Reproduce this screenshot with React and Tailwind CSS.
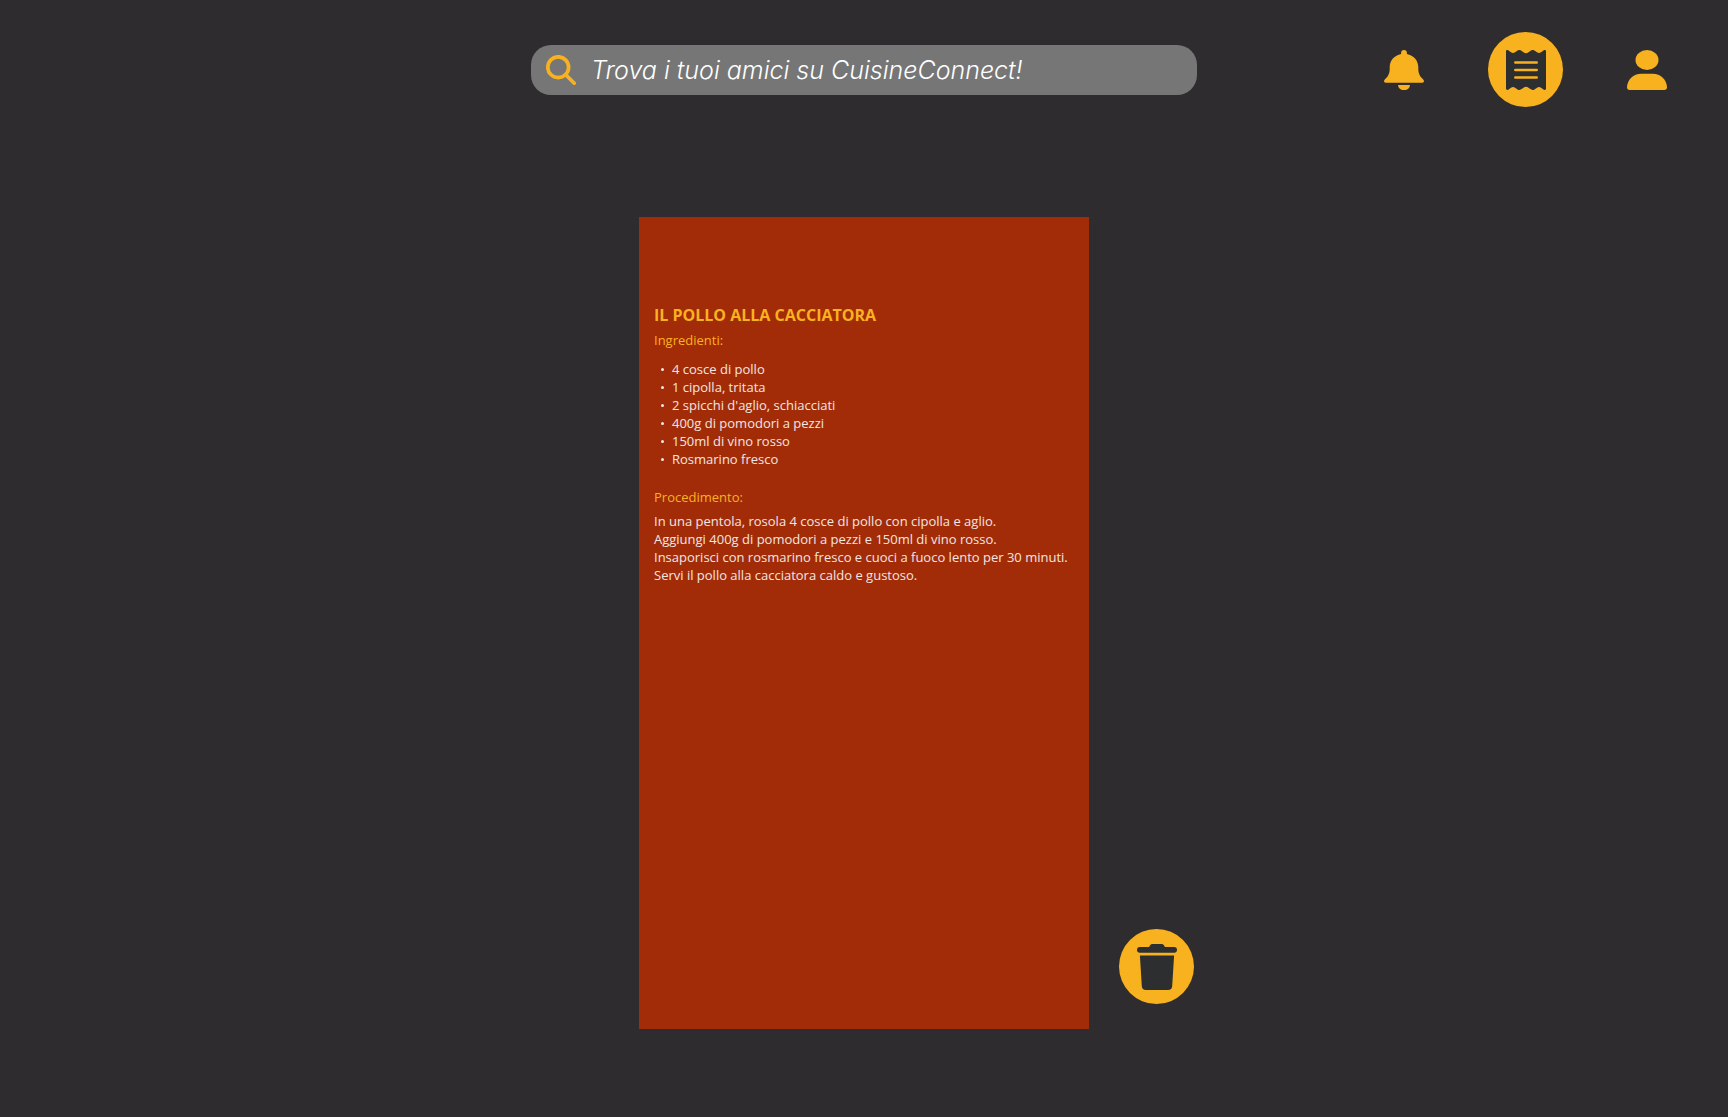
const ingredients = [
  '4 cosce di pollo',
  '1 cipolla, tritata',
  "2 spicchi d'aglio, schiacciati",
  '400g di pomodori a pezzi',
  '150ml di vino rosso',
  'Rosmarino fresco',
];

const steps = [
  'In una pentola, rosola 4 cosce di pollo con cipolla e aglio.',
  'Aggiungi 400g di pomodori a pezzi e 150ml di vino rosso.',
  'Insaporisci con rosmarino fresco e cuoci a fuoco lento per 30 minuti.',
  'Servi il pollo alla cacciatora caldo e gustoso.',
];

function SearchIcon() {
  return (
    <svg viewBox="0 0 30 30" className="size-[30px] shrink-0" fill="none" stroke="#f9b21f" aria-hidden="true">
      <circle cx="12.2" cy="12.2" r="10.4" strokeWidth="3.7" />
      <path d="M19.8 19.8 28.2 28.2" strokeWidth="3.7" strokeLinecap="round" />
    </svg>
  );
}

function BellIcon() {
  return (
    <svg viewBox="0 0 40 40" className="size-10" fill="#f9b21f" aria-hidden="true">
      <path d="M17.1 4V2.900a2.900 2.900 0 0 1 5.800 0V4C29.500 5.300 34.300 10.500 34.300 17v2.500c0 3.600 1.400 6.500 3.700 8.700l1.200 1.300c.8.900.9 1.900.5 2.500-.3.500-.8.800-1.500.8H1.800c-.7 0-1.200-.3-1.500-.8-.4-.6-.3-1.600.5-2.500L2 28.200c2.300-2.200 3.700-5.100 3.700-8.700V17C5.700 10.500 10.500 5.300 17.100 4Z" />
      <path d="M14 35H26a5.900 5.100 0 0 1-12 0Z" />
    </svg>
  );
}

function ReceiptIcon() {
  return (
    <svg viewBox="0 0 40 40" className="size-10" aria-hidden="true">
      <path
        fill="#2c2e2f"
        d="M0 1.400C0 .2 1.200-.3 2.200.3L5 2.200Q7 3.800 9 2.200L12 .3Q14 -.5 16 1.200L17.500 2.300Q20 4 22.500 2.300L24 1.200Q26 -.5 28 .3L31 2.200Q33 3.800 35 2.200L37.800.3C38.800-.3 40 .2 40 1.400V38.600C40 39.800 38.800 40.300 37.800 39.700L35 37.800Q33 36.200 31 37.800L28 39.700Q26 40.500 24 38.800L22.500 37.700Q20 36 17.500 37.700L16 38.800Q14 40.500 12 39.700L9 37.800Q7 36.200 5 37.800L2.200 39.700C1.200 40.300 0 39.800 0 38.600Z"
      />
      <path d="M9.300 12.500H30.700M9.300 20H30.700M9.300 27.500H30.700" stroke="#f9b21f" strokeWidth="2.500" strokeLinecap="round" />
    </svg>
  );
}

function UserIcon() {
  return (
    <svg viewBox="0 0 40 40" className="size-10" fill="#f9b21f" aria-hidden="true">
      <ellipse cx="20" cy="10" rx="11.500" ry="10" />
      <path d="M14.300 23.700H25.700C33.600 23.700 40 29.900 40 37.500 40 38.900 38.800 40 37.400 40H2.600C1.200 40 0 38.900 0 37.500 0 29.900 6.400 23.700 14.300 23.700Z" />
    </svg>
  );
}

function TrashIcon() {
  return (
    <svg viewBox="0 0 40 46" className="h-[46px] w-10" fill="#2c2e2f" aria-hidden="true">
      <path d="M12 2.900 13.300 1Q14 0 15.200 0H24.800Q26 0 26.700 1L28 2.900H37.200a2.800 2.900 0 0 1 0 5.800H2.800a2.800 2.900 0 0 1 0-5.800Z" />
      <path d="M2.900 11.500H37.100L35.200 41.900A4.300 4.300 0 0 1 31 46H9A4.300 4.300 0 0 1 4.800 41.900Z" />
    </svg>
  );
}

function Header() {
  return (
    <header className="grid grid-cols-[1fr_minmax(0,666px)_1fr] items-center pt-8">
      <label className="col-start-2 flex h-[50px] items-center gap-[15px] rounded-[20px] bg-[#767676] px-[15px]">
        <SearchIcon />
        <input
          type="search"
          aria-label="Cerca amici"
          placeholder="Trova i tuoi amici su CuisineConnect!"
          className="min-w-0 flex-1 bg-transparent pt-0.5 font-['Inter',sans-serif] text-[25px] font-light text-white italic outline-none placeholder:text-white"
        />
      </label>
      <nav className="flex items-center justify-end gap-16 pr-[61px]">
        <button type="button" aria-label="Notifiche">
          <BellIcon />
        </button>
        <button
          type="button"
          aria-label="Ricette"
          className="flex size-[75px] items-center justify-center rounded-full bg-[#f9b21f]"
        >
          <ReceiptIcon />
        </button>
        <button type="button" aria-label="Profilo">
          <UserIcon />
        </button>
      </nav>
    </header>
  );
}

function Recipe() {
  return (
    <article className="col-start-2 min-h-[812px] bg-[#a22c08] px-[15px] pt-[86px] text-[13px] leading-[18px] font-medium text-[#f3e6e2]">
      <h1 className="text-base leading-6 font-bold text-[#f9b21f]">IL POLLO ALLA CACCIATORA</h1>
      <h2 className="mt-1 text-[#f9b21f]">Ingredienti:</h2>
      <ul className="mt-[11px]">
        {ingredients.map((item) => (
          <li key={item} className="flex items-center gap-2 pl-[7px]">
            <span className="size-[3px] rounded-full bg-[#f3e6e2]" />
            {item}
          </li>
        ))}
      </ul>
      <h2 className="mt-5 text-[#f9b21f]">Procedimento:</h2>
      <div className="mt-1.5">
        {steps.map((step) => (
          <p key={step}>{step}</p>
        ))}
      </div>
    </article>
  );
}

export default function App() {
  return (
    <div className="min-h-screen bg-[#2f2c2f] font-['Open_Sans',sans-serif]">
      <Header />
      <main className="mt-[110px] grid grid-cols-[1fr_minmax(0,450px)_1fr] gap-x-[30px] pb-10">
        <Recipe />
        <button
          type="button"
          aria-label="Elimina ricetta"
          className="mb-[25px] flex size-[75px] items-center justify-center self-end rounded-full bg-[#f9b21f]"
        >
          <TrashIcon />
        </button>
      </main>
    </div>
  );
}
